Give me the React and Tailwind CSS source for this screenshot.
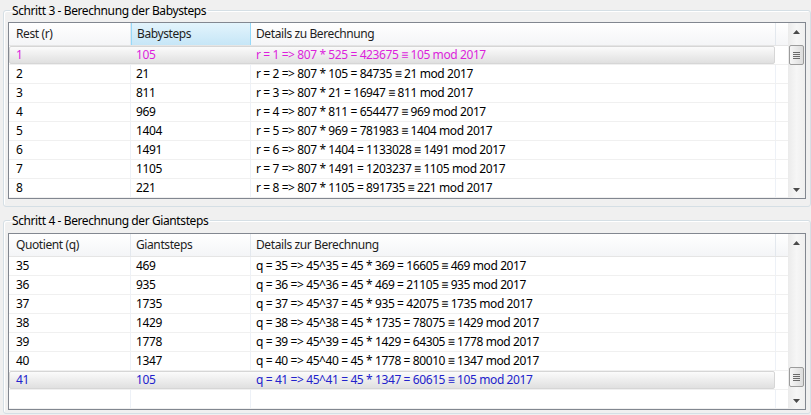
import React from "react";

const babysteps = [
  ["1", "105", "r = 1 => 807 * 525 = 423675 ≡ 105 mod 2017"],
  ["2", "21", "r = 2 => 807 * 105 = 84735 ≡ 21 mod 2017"],
  ["3", "811", "r = 3 => 807 * 21 = 16947 ≡ 811 mod 2017"],
  ["4", "969", "r = 4 => 807 * 811 = 654477 ≡ 969 mod 2017"],
  ["5", "1404", "r = 5 => 807 * 969 = 781983 ≡ 1404 mod 2017"],
  ["6", "1491", "r = 6 => 807 * 1404 = 1133028 ≡ 1491 mod 2017"],
  ["7", "1105", "r = 7 => 807 * 1491 = 1203237 ≡ 1105 mod 2017"],
  ["8", "221", "r = 8 => 807 * 1105 = 891735 ≡ 221 mod 2017"],
];

const giantsteps = [
  ["35", "469", "q = 35 => 45^35 = 45 * 369 = 16605 ≡ 469 mod 2017"],
  ["36", "935", "q = 36 => 45^36 = 45 * 469 = 21105 ≡ 935 mod 2017"],
  ["37", "1735", "q = 37 => 45^37 = 45 * 935 = 42075 ≡ 1735 mod 2017"],
  ["38", "1429", "q = 38 => 45^38 = 45 * 1735 = 78075 ≡ 1429 mod 2017"],
  ["39", "1778", "q = 39 => 45^39 = 45 * 1429 = 64305 ≡ 1778 mod 2017"],
  ["40", "1347", "q = 40 => 45^40 = 45 * 1778 = 80010 ≡ 1347 mod 2017"],
  ["41", "105", "q = 41 => 45^41 = 45 * 1347 = 60615 ≡ 105 mod 2017"],
  ["", "", ""],
];

const Arrow = ({ down }) => (
  <svg width="7" height="4" viewBox="0 0 7 4" className={down ? "rotate-180" : ""}>
    <path d="M3.5 0 L7 4 L0 4 Z" fill="#4a4a4a" />
  </svg>
);

// windows-7 style scrollbar, thumb position passed in
const ScrollBar = ({ thumbTop }) => (
  <div className="flex w-[17px] flex-col bg-linear-to-r from-[#ebebeb] via-[#f6f6f6] to-[#efefef]">
    <div className="flex h-[17px] items-center justify-center pt-[1px]">
      <Arrow />
    </div>
    <div className="flex-1 px-[1px]">
      <div
        className="flex h-[20px] flex-col items-center justify-center gap-[1px] rounded-[2px] border border-[#9c9c9c] bg-linear-to-r from-[#f6f6f6] to-[#dcdcdc]"
        style={{ marginTop: thumbTop }}
      >
        <div className="h-[1px] w-[7px] bg-[#6a6a6a]" />
        <div className="h-[1px] w-[7px] bg-[#6a6a6a]" />
        <div className="h-[1px] w-[7px] bg-[#6a6a6a]" />
        <div className="h-[1px] w-[7px] bg-[#6a6a6a]" />
      </div>
    </div>
    <div className="flex h-[17px] items-center justify-center">
      <Arrow down />
    </div>
  </div>
);

const ListView = ({ headers, rows, selected, selectedColor, sortedCol, thumbTop }) => (
  <div className="flex h-[177px] border border-[#828790] bg-white">
    <div className="flex w-[779px] flex-col">
      <div className="flex h-[23px] border-b border-[#e5e5e5] bg-linear-to-b from-white to-[#f4f5f7]">
        {headers.map((h, i) => (
          <div
            key={h}
            className={
              (i === 0 ? "w-[122px] pl-[7px] " : i === 1 ? "w-[120px] pl-[5px] " : "w-[525px] pl-[5px] ") +
              (i === sortedCol
                ? "border-x border-[#96d9f9] bg-linear-to-b from-[#e3f4fc] to-[#c6e6f7] "
                : "border-r border-[#e3e8ee] ") +
              "flex items-center text-[#1e1e1e]"
            }
          >
            {h}
          </div>
        ))}
        <div className="flex-1" />
      </div>
      {rows.map((r, i) => (
        <div key={i} className="flex h-[19px] border-b border-[#f0f0f0]">
          {i === selected ? (
            <div
              className="flex w-[766px] items-center rounded-[2px] border border-[#d6d6d6] bg-linear-to-b from-[#fbfbfb] to-[#e0e0e0]"
              style={{ color: selectedColor }}
            >
              <div className="w-[121px] pl-[6px]">{r[0]}</div>
              <div className="w-[120px] pl-[5px]">{r[1]}</div>
              <div className="flex-1 pl-[5px]">{r[2]}</div>
            </div>
          ) : (
            <>
              <div className="flex w-[122px] items-center border-r border-[#edf1f7] pl-[7px]">{r[0]}</div>
              <div className="flex w-[120px] items-center border-r border-[#edf1f7] pl-[5px]">{r[1]}</div>
              <div className="flex w-[525px] items-center border-r border-[#edf1f7] pl-[5px]">{r[2]}</div>
            </>
          )}
          <div className="flex-1" />
        </div>
      ))}
    </div>
    <ScrollBar thumbTop={thumbTop} />
  </div>
);

const GroupBox = ({ title, children, className }) => (
  <fieldset
    className={
      "w-[806px] rounded-[3px] border border-[#d5dfe5] px-[4px] shadow-[inset_1px_1px_0_#fff] " + className
    }
  >
    <legend className="ml-[2px] px-[2px] leading-[13px] text-black">{title}</legend>
    {children}
  </fieldset>
);

export default function App() {
  return (
    <div className="h-[415px] w-[811px] overflow-hidden bg-[#f0f0f0] pl-[3px] pt-[4px] font-['Noto_Sans',sans-serif] text-[12px] tracking-[-0.4px] text-black">
      <GroupBox title="Schritt 3 - Berechnung der Babysteps" className="pb-[7px]">
        <div className="mt-[5px]">
          <ListView
            headers={["Rest (r)", "Babysteps", "Details zu Berechnung"]}
            rows={babysteps}
            selected={0}
            selectedColor="#dc1fdc"
            sortedCol={1}
            thumbTop={5}
          />
        </div>
      </GroupBox>
      <GroupBox title="Schritt 4 - Berechnung der Giantsteps" className="mt-[7px] pb-[3px]">
        <div className="mt-[6px]">
          <ListView
            headers={["Quotient (q)", "Giantsteps", "Details zur Berechnung"]}
            rows={giantsteps}
            selected={6}
            selectedColor="#2222cc"
            sortedCol={-1}
            thumbTop={116}
          />
        </div>
      </GroupBox>
    </div>
  );
}
